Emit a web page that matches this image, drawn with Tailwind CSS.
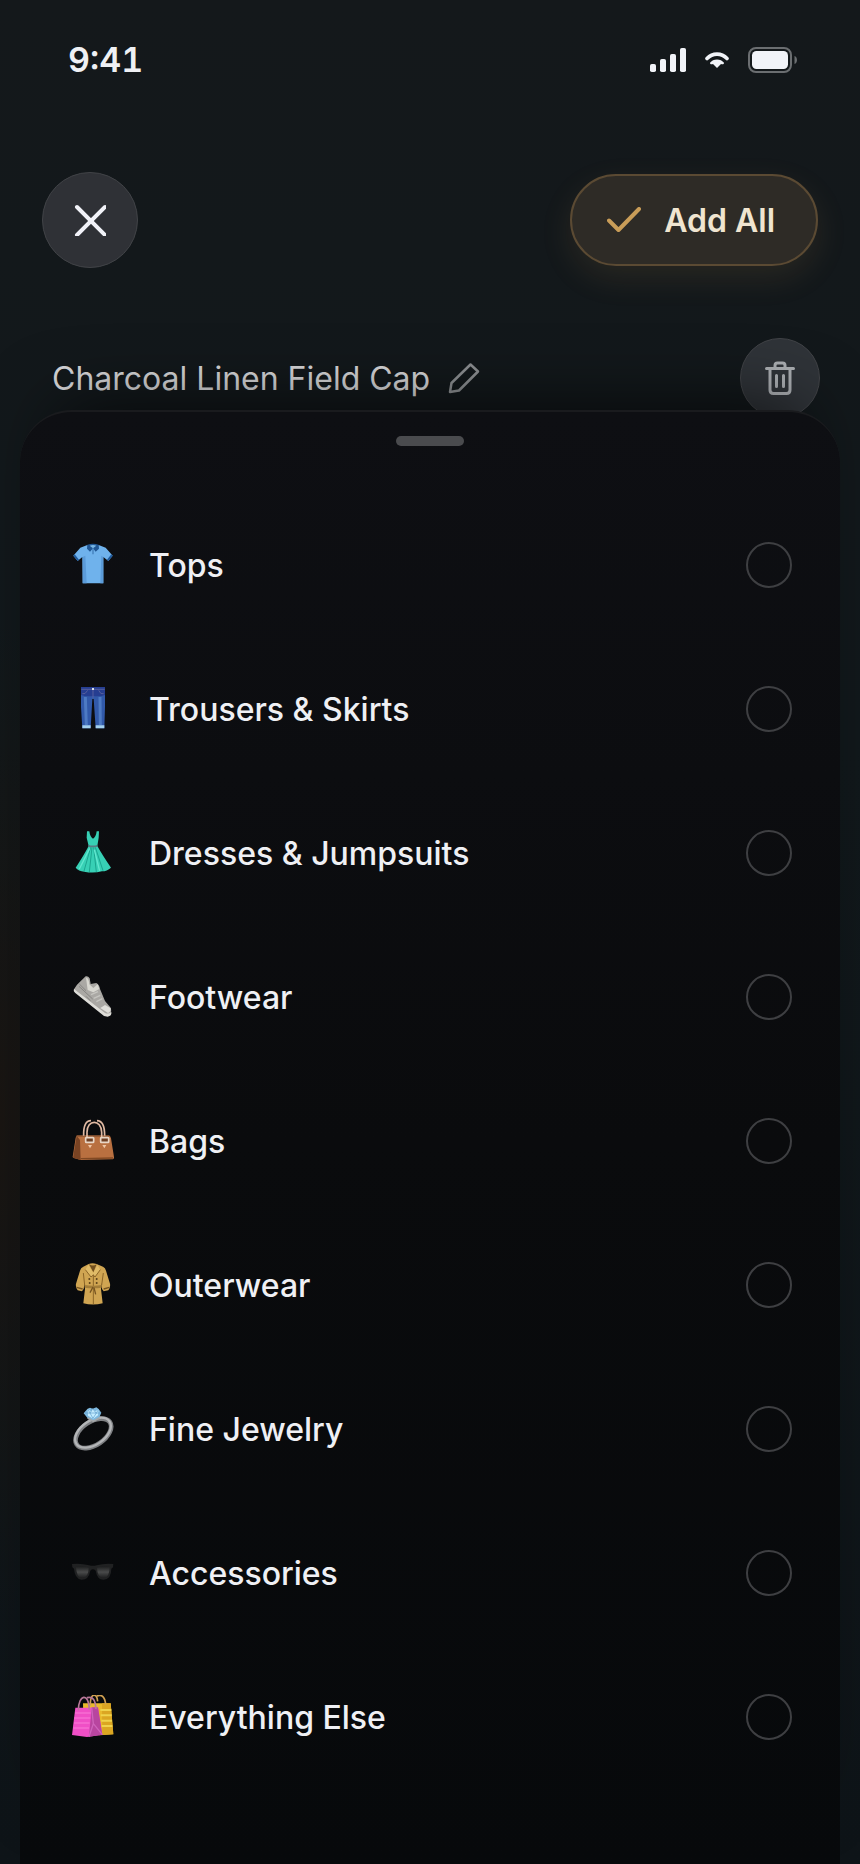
<!DOCTYPE html>
<html lang="en">
<head>
    <meta charset="UTF-8">
    <meta name="viewport" content="width=device-width, initial-scale=1.0">
    <title>Choose Category</title>
    <script src="https://cdn.jsdelivr.net/npm/@tailwindcss/browser@4"></script>
</head>
<body class="min-h-screen flex flex-col bg-[#11171a] bg-[radial-gradient(ellipse_120px_500px_at_0%_60%,#191512,transparent),linear-gradient(#14181b,#11181b_40%,#0e1418)] font-[Inter,sans-serif] text-[#eff0f4]">
    <!-- Status bar -->
    <header class="h-30 flex items-center justify-between pl-17 pr-[62px]">
        <span class="text-[34px] leading-10 font-semibold tabular-nums">9:41</span>
        <div class="flex items-center">
            <svg class="w-9 h-6" viewBox="0 0 36 24" fill="#f1f3f8">
                <rect x="0" y="16" width="6" height="8" rx="1.8"/>
                <rect x="10" y="11" width="6" height="13" rx="1.8"/>
                <rect x="20" y="6" width="6" height="18" rx="1.8"/>
                <rect x="30" y="0" width="6" height="24" rx="1.8"/>
            </svg>
            <svg class="w-6 h-4 ml-[19px]" viewBox="0 0 24 16" fill="none">
                <path d="M2 6.500C7.500 .6 16.500 .6 22 6.500" stroke="#f1f3f8" stroke-width="3.600" stroke-linecap="round"/>
                <path d="M5 10.800C8 6.300 16 6.300 19 10.800C19 12.300 17.500 12.600 16 12L12 16L8 12C6.500 12.600 5 12.300 5 10.800Z" fill="#f1f3f8"/>
            </svg>
            <svg class="w-[50px] h-[26px] ml-[19px]" viewBox="0 0 50 26" fill="none">
                <rect x="1" y="1" width="42" height="24" rx="7" stroke="#6b6e71" stroke-width="2"/>
                <rect x="4" y="4" width="36" height="18" rx="4.500" fill="#f1f3f8"/>
                <path d="M46.500 9C49.800 10 49.800 16 46.500 17Z" fill="#6b6e71"/>
            </svg>
        </div>
    </header>

    <!-- Actions -->
    <div class="mt-[52px] flex items-center justify-between px-[42px]">
        <button aria-label="Close" class="size-24 rounded-full bg-[#2f3136] border border-[#414347] flex items-center justify-center">
            <svg class="size-8" viewBox="0 0 32 32" fill="none" stroke="#f1f2f8" stroke-width="4" stroke-linecap="round">
                <path d="M3 3L31 31M31 3L3 31"/>
            </svg>
        </button>
        <button class="h-[92px] pl-[35px] pr-[41px] rounded-full bg-[#2e2b26] border-2 border-[#5b4a33] flex items-center gap-[23px] text-[32px] leading-10 font-semibold text-[#f0e5d0] shadow-[0_12px_32px_rgba(200,150,80,0.12)]">
            <svg class="w-[34px] h-[26px]" viewBox="0 0 34 26" fill="none" stroke="#c99d58" stroke-width="4" stroke-linecap="round" stroke-linejoin="round">
                <path d="M2 13.500L11.500 23L32 2"/>
            </svg>
            <span class="pt-0.5">Add All</span>
        </button>
    </div>

    <!-- Item behind the sheet -->
    <div class="mt-[70px] flex items-center justify-between pl-[52px] pr-10">
        <div class="flex items-center gap-[18px]">
            <h1 class="pt-0.5 text-[32px] leading-10 font-normal text-[#d6d6d8]">Charcoal Linen Field Cap</h1>
            <button aria-label="Rename">
                <svg class="size-8" viewBox="0 0 32 32" fill="none" stroke="#8d9093" stroke-width="2.500" stroke-linejoin="round">
                    <path d="M2 30L3.500 21L22.500 2.500L30 9.500L11 28.500Z"/>
                </svg>
            </button>
        </div>
        <button aria-label="Delete" class="size-20 rounded-full bg-[#2f3338] border border-[#414347] flex items-center justify-center">
            <svg class="w-[30px] h-[34px]" viewBox="0 0 30 34" fill="none" stroke="#abaeb2" stroke-width="3" stroke-linecap="round" stroke-linejoin="round">
                <path d="M1.500 7.500H28.500M10 7V4.500Q10 2 12.500 2H17.500Q20 2 20 4.500V7M5 8V29Q5 32.500 8.500 32.500H21.500Q25 32.500 25 29V8M11.500 14.500V25.500M18.500 14.500V25.500"/>
            </svg>
        </button>
    </div>

    <!-- Bottom sheet -->
    <main class="relative flex-1 -mt-2 mx-5 rounded-t-[52px] border-t-2 border-[#1a1b1e] bg-linear-to-b from-[#0e0f13] via-[#0a0b0d] via-50% to-[#07090b] pt-6 shadow-[0_-40px_72px_-40px_rgba(0,0,0,0.7)]">
        <div class="w-[68px] h-2.5 mx-auto rounded-full bg-[#4a4b4e]"></div>
        <form class="mt-[47px] text-[32px] leading-10 font-medium">
            <label class="h-36 pl-[51px] pr-12 flex items-center gap-[34px]">
                <!-- polo shirt -->
                <svg class="size-11" viewBox="0 0 132 132">
                    <path d="M49 6L28 14L7 38L20 54L34 42L35 121H97V42L112 54L125 38L104 14L83 6Q66 22 49 6Z" fill="#6fb2ec"/>
                    <path d="M35 42V121H47L43 38ZM97 42V121H88L91 38Z" fill="#5b9bd9"/>
                    <path d="M7 38L20 54L24 50L11 34ZM125 38L112 54L108 50L121 34Z" fill="#1f5a9d"/>
                    <path d="M49 5Q66 0 83 5L84 17L74 26L66 16L57 26L48 17Z" fill="#205693"/>
                    <path d="M56 8Q66 4 76 8L66 16Z" fill="#79b7e5"/>
                    <path d="M66 16V34" stroke="#427fbb" stroke-width="4"/>
                </svg>
                <span class="flex-1 pt-0.5">Tops</span>
                <input type="radio" name="category" class="appearance-none size-[46px] rounded-full border-2 border-[#3e3f42] checked:bg-[#c99d58]">
            </label>
            <label class="h-36 pl-[51px] pr-12 flex items-center gap-[34px]">
                <!-- jeans -->
                <svg class="size-11" viewBox="0 0 132 132">
                    <path d="M30 0H102V60L100 124H74L68 36H64L59 124H34L30 60Z" fill="#3159a9"/>
                    <path d="M30 0H102V24Q86 30 66 27Q46 30 30 24Z" fill="#263e91"/>
                    <path d="M43 30L46 114M87 30L88 114" stroke="#4d7ac3" stroke-width="9"/>
                    <path d="M31 7H101M34 20Q42 24 50 10M98 20Q89 24 83 10M66 8V34" fill="none" stroke="#565f9d" stroke-width="3"/>
                    <path d="M34 115H59V124H34ZM74 115H100V124H74Z" fill="#a4d0ee"/>
                    <rect x="63" y="3" width="6" height="6" fill="#dbe0e8"/>
                </svg>
                <span class="flex-1 pt-0.5">Trousers &amp; Skirts</span>
                <input type="radio" name="category" class="appearance-none size-[46px] rounded-full border-2 border-[#3e3f42] checked:bg-[#c99d58]">
            </label>
            <label class="h-36 pl-[51px] pr-12 flex items-center gap-[34px]">
                <!-- dress -->
                <svg class="size-11" viewBox="0 0 132 132">
                    <path d="M48 1H55Q57 18 66 23Q75 18 77 1H84L83 20L79 45Q94 72 120 110Q108 121 93 121Q66 128 40 122Q22 120 14 110Q39 72 53 45L47 20Z" fill="#37d0b5"/>
                    <path d="M59 49L39 120M63 49L55 123M68 49L76 123M73 49L96 119" stroke="#1ba58f" stroke-width="3"/>
                    <path d="M56 52L25 114M70 56L86 120" stroke="#62e7cf" stroke-width="4"/>
                    <path d="M52 41Q66 46 79 41V47Q66 51 52 47Z" fill="#587b84"/>
                </svg>
                <span class="flex-1 pt-0.5">Dresses &amp; Jumpsuits</span>
                <input type="radio" name="category" class="appearance-none size-[46px] rounded-full border-2 border-[#3e3f42] checked:bg-[#c99d58]">
            </label>
            <label class="h-36 pl-[51px] pr-12 flex items-center gap-[34px]">
                <!-- sneaker -->
                <svg class="size-11" viewBox="0 0 132 132">
                    <path d="M18 29L44 4Q51 2 56 10L59 27L76 24Q85 29 87 42L102 78L119 98Q124 114 114 121L101 120L71 98L13 51Q6 45 10 41Z" fill="#aaa8a4"/>
                    <path d="M9 42L101 113Q111 119 121 111Q123 123 110 125L99 123L12 53Q6 48 9 42Z" fill="#deddd8"/>
                    <path d="M45 8Q53 7 55 28L67 39L80 28L85 42L67 52L50 45Z" fill="#d9d8d1"/>
                    <path d="M88 99L102 90L119 100Q120 111 111 114Z" fill="#e0dfda"/>
                    <path d="M60 59L81 50M68 70L88 61M76 80L94 71" stroke="#c6c5c0" stroke-width="4"/>
                    <path d="M24 34L65 72M25 27L45 47M45 64L58 77" stroke="#868582" stroke-width="3"/>
                </svg>
                <span class="flex-1 pt-0.5">Footwear</span>
                <input type="radio" name="category" class="appearance-none size-[46px] rounded-full border-2 border-[#3e3f42] checked:bg-[#c99d58]">
            </label>
            <label class="h-36 pl-[51px] pr-12 flex items-center gap-[34px]">
                <!-- handbag -->
                <svg class="size-11" viewBox="0 0 132 132">
                    <path d="M17 50H115Q118 51 120 58L129 114Q130 121 122 121L29 123L6 116Q4 113 6 108L14 56Z" fill="#b97040"/>
                    <path d="M17 50L27 63L29 123L6 116Z" fill="#794323"/>
                    <path d="M17 51H115" stroke="#8c5432" stroke-width="4"/>
                    <path d="M29 119L126 117" stroke="#814923" stroke-width="4"/>
                    <path d="M48 62V40C48 0 91 0 92 40V62M38 50C37 20 45 5 60 5M101 50C101 20 93 5 78 5" fill="none" stroke="#e0b9a2" stroke-width="5"/>
                    <rect x="44" y="56" width="24" height="14" rx="2" fill="#714124" stroke="#e8d6c6" stroke-width="5"/>
                    <rect x="89" y="56" width="24" height="14" rx="2" fill="#714124" stroke="#e8d6c6" stroke-width="5"/>
                    <path d="M51 78H63L57 88ZM94 78H106L100 88Z" fill="#efc7a6"/>
                </svg>
                <span class="flex-1 pt-0.5">Bags</span>
                <input type="radio" name="category" class="appearance-none size-[46px] rounded-full border-2 border-[#3e3f42] checked:bg-[#c99d58]">
            </label>
            <label class="h-36 pl-[51px] pr-12 flex items-center gap-[34px]">
                <!-- trench coat -->
                <svg class="size-11" viewBox="0 0 132 132">
                    <path d="M53 3Q64 -2 77 3L96 11Q103 14 105 23L117 62Q119 72 112 82L98 85L93 78L92 60L90 78L95 121Q66 128 37 121L42 78L41 60L38 78L33 85L20 82Q13 72 15 62L27 23Q29 14 37 11Z" fill="#d0a552"/>
                    <path d="M54 4Q66 11 77 4L67 28Z" fill="#72501f"/>
                    <path d="M52 5L67 30L79 6L88 20L72 42L67 36L60 42L43 20Z" fill="#e0bb68"/>
                    <path d="M37 30L41 66M97 30L92 66M67 35V123M43 20L60 42L67 36L72 42L88 20" fill="none" stroke="#8c6527" stroke-width="3"/>
                    <path d="M41 66Q67 71 92 66V74Q67 78 41 74Z" fill="#a37d38"/>
                    <path d="M66 72L57 89M69 74L74 94M17 73L35 78M115 73L98 78" stroke="#765421" stroke-width="4"/>
                    <g fill="#5d421a"><circle cx="55" cy="48" r="3"/><circle cx="77" cy="48" r="3"/><circle cx="56" cy="60" r="3"/><circle cx="77" cy="60" r="3"/></g>
                </svg>
                <span class="flex-1 pt-0.5">Outerwear</span>
                <input type="radio" name="category" class="appearance-none size-[46px] rounded-full border-2 border-[#3e3f42] checked:bg-[#c99d58]">
            </label>
            <label class="h-36 pl-[51px] pr-12 flex items-center gap-[34px]">
                <!-- diamond ring -->
                <svg class="size-11" viewBox="0 0 132 132" fill="none">
                    <ellipse cx="67" cy="79" rx="60" ry="35" transform="rotate(-34 67 79)" stroke="#7d7f82" stroke-width="14"/>
                    <ellipse cx="66" cy="77" rx="60" ry="36" transform="rotate(-34 66 77)" stroke="#b4b6b8" stroke-width="7"/>
                    <path d="M43 13L50 5L57 2L65 5L76 1L83 6L91 17L84 33L68 42L50 34L38 19Z" fill="#7eb9df"/>
                    <path d="M50 6L60 13L65 5L73 13L83 7L81 25L67 35L51 26Z" fill="#c3ecff"/>
                    <path d="M50 6L66 34L83 7M42 18H90M57 19L65 5L76 19" stroke="#5e9dcb" stroke-width="2"/>
                    <path d="M50 33L67 43L86 32" stroke="#a3a7aa" stroke-width="5"/>
                </svg>
                <span class="flex-1 pt-0.5">Fine Jewelry</span>
                <input type="radio" name="category" class="appearance-none size-[46px] rounded-full border-2 border-[#3e3f42] checked:bg-[#c99d58]">
            </label>
            <label class="h-36 pl-[51px] pr-12 flex items-center gap-[34px]">
                <!-- sunglasses -->
                <svg class="size-11" viewBox="0 0 132 132">
                    <defs>
                        <linearGradient id="lens" x1="0" y1="0" x2="0" y2="1">
                            <stop offset="0" stop-color="#1b1c1d"/>
                            <stop offset=".5" stop-color="#4a4b4b"/>
                            <stop offset="1" stop-color="#1d1e1f"/>
                        </linearGradient>
                    </defs>
                    <path d="M3 39Q30 36 54 43Q66 46 77 43Q101 36 127 39L126 49L121 53Q121 84 98 86Q79 87 74 59Q66 51 58 59Q53 87 31 86Q11 82 9 53L4 49Z" fill="#202122"/>
                    <path d="M15 47Q35 43 53 50Q53 80 33 81Q16 79 15 47ZM116 47Q96 43 78 50Q79 80 98 81Q116 79 116 47Z" fill="url(#lens)"/>
                </svg>
                <span class="flex-1 pt-0.5">Accessories</span>
                <input type="radio" name="category" class="appearance-none size-[46px] rounded-full border-2 border-[#3e3f42] checked:bg-[#c99d58]">
            </label>
            <label class="h-36 pl-[51px] pr-12 flex items-center gap-[34px]">
                <!-- shopping bags -->
                <svg class="size-11" viewBox="0 0 132 132">
                    <path d="M36 25H119L127 118L86 121L38 110Z" fill="#e9b92b"/>
                    <path d="M93 25H119L127 118L94 120Z" fill="#dba622"/>
                    <path d="M88 45H121M89 61H122M91 77H123M92 93H124" stroke="#f0d34c" stroke-width="6"/>
                    <path d="M58 32C57 -8 78 -8 80 19M78 3C92 -3 102 5 104 29" fill="none" stroke="#d2a252" stroke-width="5"/>
                    <path d="M13 38H81L94 119L48 126L3 120Z" fill="#f04fc6"/>
                    <path d="M62 37H81L94 119L54 125Z" fill="#b8459f"/>
                    <path d="M12 54H59M10 69H58M9 84H56M7 99H54" stroke="#f66dd2" stroke-width="5"/>
                    <path d="M62 37L67 86L54 125M67 86L94 119" fill="none" stroke="#cf64bc" stroke-width="4"/>
                    <path d="M22 46C22 -2 54 -9 55 44M48 8C67 3 73 16 75 42" fill="none" stroke="#b87899" stroke-width="5"/>
                </svg>
                <span class="flex-1 pt-0.5">Everything Else</span>
                <input type="radio" name="category" class="appearance-none size-[46px] rounded-full border-2 border-[#3e3f42] checked:bg-[#c99d58]">
            </label>
        </form>
    </main>
</body>
</html>
